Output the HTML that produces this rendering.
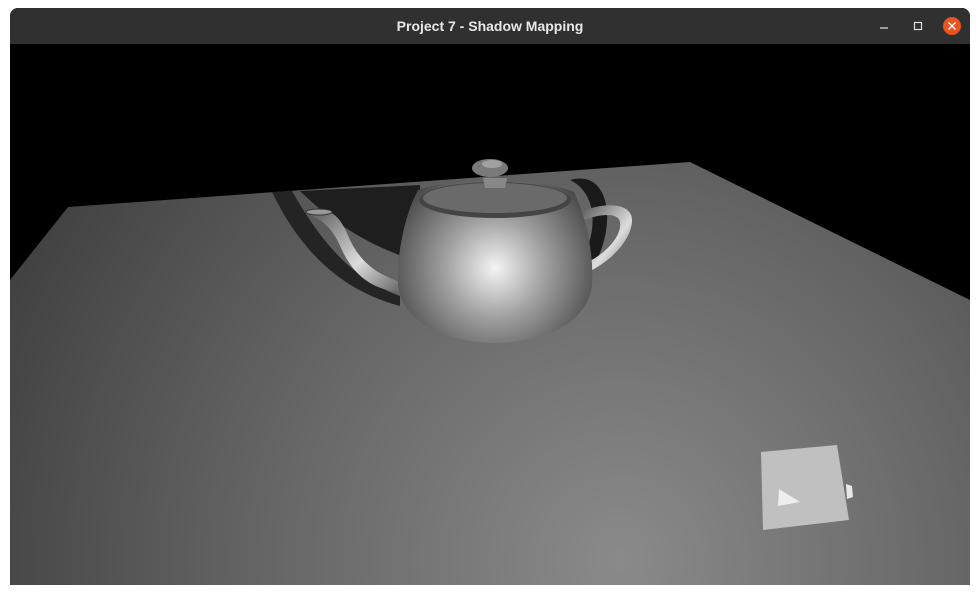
<!DOCTYPE html>
<html><head><style>
body{margin:0;width:980px;height:595px;background:#fff;overflow:hidden;font-family:"Liberation Sans",sans-serif}
#win{position:absolute;left:10px;top:8px;width:960px;height:577px;background:#000;border-radius:8px 8px 0 0;overflow:hidden}
#tb{position:absolute;left:0;top:0;width:960px;height:36px;background:#303030;color:#e8e8e8;font-weight:bold;font-size:14px;text-align:center;line-height:37px}
</style></head><body>
<div id="win">
<div id="tb">Project 7 - Shadow Mapping</div>
<svg style="position:absolute;right:0;top:0" width="960" height="36">
<line x1="870" y1="20" x2="878" y2="20" stroke="#ddd" stroke-width="1.2"/>
<rect x="904.5" y="14.5" width="7" height="7" fill="none" stroke="#ddd" stroke-width="1.2"/>
<circle cx="942" cy="18" r="9" fill="#e95420"/>
<path d="M938.5 14.5l7 7M945.5 14.5l-7 7" stroke="#fff" stroke-width="1.4"/>
</svg>
<svg style="position:absolute;left:0;top:36px" width="960" height="541" viewBox="10 44 960 541">
<defs>
<radialGradient id="fl" cx="620" cy="560" r="700" gradientUnits="userSpaceOnUse">
<stop offset="0" stop-color="#8a8a8a"/><stop offset="0.5" stop-color="#666"/><stop offset="1" stop-color="#3e3e3e"/></radialGradient>
<radialGradient id="tp" cx="495" cy="268" r="125" gradientUnits="userSpaceOnUse">
<stop offset="0" stop-color="#f4f4f4"/><stop offset="0.4" stop-color="#a0a0a0"/><stop offset="1" stop-color="#333"/></radialGradient>
<linearGradient id="sp" x1="0" y1="0" x2="1" y2="1"><stop offset="0" stop-color="#555"/><stop offset="0.6" stop-color="#ddd"/><stop offset="1" stop-color="#666"/></linearGradient>
</defs>
<rect x="10" y="44" width="960" height="541" fill="#000"/>
<polygon points="68,207 690,162 970,300 970,585 10,585 10,280" fill="url(#fl)"/>
<path d="M272,192 L292,191 C320,240 350,278 400,296 L400,306 C340,290 300,250 272,192Z" fill="#242424"/>
<path d="M300,191 L420,185 L420,262 C380,250 340,230 300,191Z" fill="#1e1e1e"/>
<path d="M570,180 C612,168 618,230 590,272 L580,262 C600,230 596,192 570,180Z" fill="#1a1a1a"/>
<path d="M580,212 C610,200 632,205 632,220 C632,240 610,262 588,272 L588,262 C608,252 622,235 620,222 C618,212 600,214 584,220Z" fill="url(#sp)"/>
<path d="M306,212 C330,205 340,215 350,240 C362,265 380,275 400,282 L400,292 C370,290 352,272 342,250 C334,232 326,220 306,214Z" fill="url(#sp)"/>
<ellipse cx="319" cy="212" rx="13" ry="3" fill="#999" stroke="#333"/>
<path d="M418,190 C450,178 545,178 574,192 C585,215 594,250 592,285 C588,320 550,342 495,343 C440,342 402,320 398,285 C397,250 405,215 418,190Z" fill="url(#tp)"/>
<ellipse cx="495" cy="200" rx="76" ry="18" fill="#444"/>
<ellipse cx="495" cy="198" rx="72" ry="15" fill="#6a6a6a"/>
<path d="M483,178 L507,178 L505,188 L485,188Z" fill="#888"/>
<ellipse cx="490" cy="168" rx="18" ry="9" fill="#7a7a7a"/>
<ellipse cx="492" cy="164" rx="10" ry="4" fill="#a0a0a0"/>
<polygon points="761,452 837,445 849,520 763,530" fill="#c0c0c0"/>
<polygon points="846,484 852,486 853,497 847,499" fill="#e8e8e8"/>
<polygon points="779,489 800,502 778,506" fill="#eee"/>
</svg>
</div>
</body></html>
